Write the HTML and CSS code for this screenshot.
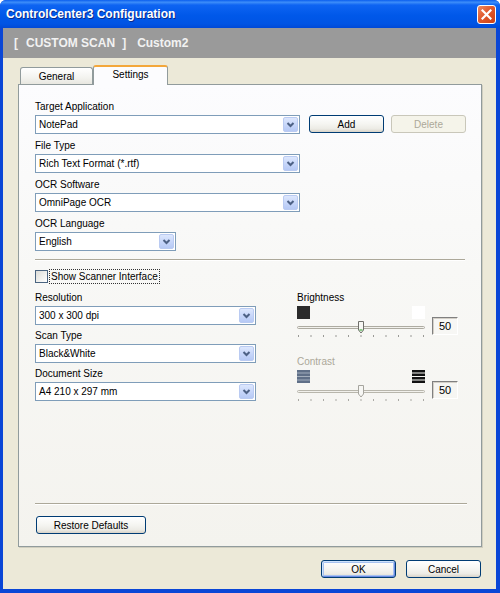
FILE: index.html
```html
<!DOCTYPE html>
<html>
<head>
<meta charset="utf-8">
<link rel="stylesheet" href="styles.css">
</head>
<body>
<div class="window">
  <div class="titlebar">
    <span class="title">ControlCenter3 Configuration</span>
    <div class="close">
      <svg width="11" height="11" viewBox="0 0 11 11"><path d="M1.5 1.5 L9.5 9.5 M9.5 1.5 L1.5 9.5" stroke="#fff" stroke-width="2.2" stroke-linecap="square"/></svg>
    </div>
  </div>
  <div class="client">
    <div class="banner">
      <span>[</span><span class="b-scan">CUSTOM SCAN</span><span class="b-close">]</span><span class="b-name">Custom2</span>
    </div>
    <div class="body">
      <div class="tabs">
        <div class="tab">General</div>
        <div class="tab active">Settings</div>
      </div>
      <div class="panel">
        <div class="group">
          <div class="lbl">Target Application</div>
          <div class="row">
            <div class="combo w265"><span class="ctext">NotePad</span><span class="cbtn"><svg width="13" height="13" viewBox="0 0 13 13"><path d="M3.5 5 L6.5 8 L9.5 5" fill="none" stroke="#4D6185" stroke-width="2"/></svg></span></div>
            <button class="btn add">Add</button>
            <button class="btn disabled del">Delete</button>
          </div>
        </div>
        <div class="group">
          <div class="lbl">File Type</div>
          <div class="combo w265"><span class="ctext">Rich Text Format (*.rtf)</span><span class="cbtn"><svg width="13" height="13" viewBox="0 0 13 13"><path d="M3.5 5 L6.5 8 L9.5 5" fill="none" stroke="#4D6185" stroke-width="2"/></svg></span></div>
        </div>
        <div class="group">
          <div class="lbl">OCR Software</div>
          <div class="combo w265"><span class="ctext">OmniPage OCR</span><span class="cbtn"><svg width="13" height="13" viewBox="0 0 13 13"><path d="M3.5 5 L6.5 8 L9.5 5" fill="none" stroke="#4D6185" stroke-width="2"/></svg></span></div>
        </div>
        <div class="group">
          <div class="lbl">OCR Language</div>
          <div class="combo w141"><span class="ctext">English</span><span class="cbtn"><svg width="13" height="13" viewBox="0 0 13 13"><path d="M3.5 5 L6.5 8 L9.5 5" fill="none" stroke="#4D6185" stroke-width="2"/></svg></span></div>
        </div>
        <div class="sep top-sep"></div>
        <div class="check-row">
          <span class="checkbox"></span>
          <span class="check-label">Show Scanner Interface</span>
        </div>
        <div class="lower">
          <div class="left-col">
            <div class="group">
              <div class="lbl">Resolution</div>
              <div class="combo w221"><span class="ctext">300 x 300 dpi</span><span class="cbtn"><svg width="13" height="13" viewBox="0 0 13 13"><path d="M3.5 5 L6.5 8 L9.5 5" fill="none" stroke="#4D6185" stroke-width="2"/></svg></span></div>
            </div>
            <div class="group g4">
              <div class="lbl">Scan Type</div>
              <div class="combo w221"><span class="ctext">Black&amp;White</span><span class="cbtn"><svg width="13" height="13" viewBox="0 0 13 13"><path d="M3.5 5 L6.5 8 L9.5 5" fill="none" stroke="#4D6185" stroke-width="2"/></svg></span></div>
            </div>
            <div class="group g4">
              <div class="lbl">Document Size</div>
              <div class="combo w221"><span class="ctext">A4 210 x 297 mm</span><span class="cbtn"><svg width="13" height="13" viewBox="0 0 13 13"><path d="M3.5 5 L6.5 8 L9.5 5" fill="none" stroke="#4D6185" stroke-width="2"/></svg></span></div>
            </div>
          </div>
          <div class="right-col">
            <div class="ctrl">
              <div class="lbl">Brightness</div>
              <div class="ctrl-row">
                <div class="ctrl-main">
                  <div class="icons">
                    <span class="sq-black"></span>
                    <span class="sq-white"></span>
                  </div>
                  <svg class="slider" width="128" height="20" viewBox="0 0 128 20">
                    <rect x="0.5" y="6.5" width="127" height="2" rx="1" fill="#F2F1EC" stroke="#ADABA1"/>
                    <path d="M61.5 1.5 H66.5 V10 L64 13 L61.5 10 Z" fill="#F7F7F4" stroke="#6F6F6A"/>
                    <line x1="62.5" y1="10" x2="65.5" y2="10" stroke="#21A121"/>
                    <g fill="#9A9A96">
                      <rect x="1" y="15" width="1" height="2"/><rect x="13.5" y="15" width="1" height="2"/><rect x="26" y="15" width="1" height="2"/><rect x="38.5" y="15" width="1" height="2"/><rect x="51" y="15" width="1" height="2"/><rect x="63.5" y="15" width="1" height="2"/><rect x="76" y="15" width="1" height="2"/><rect x="88.5" y="15" width="1" height="2"/><rect x="101" y="15" width="1" height="2"/><rect x="113.5" y="15" width="1" height="2"/><rect x="126" y="15" width="1" height="2"/>
                    </g>
                  </svg>
                </div>
                <div class="valbox">50</div>
              </div>
            </div>
            <div class="ctrl contrast">
              <div class="lbl dim">Contrast</div>
              <div class="ctrl-row">
                <div class="ctrl-main">
                  <div class="icons">
                    <svg width="13" height="13" viewBox="0 0 13 13">
                      <rect width="13" height="13" fill="#A3AEBC"/>
                      <rect y="0" width="13" height="2.5" fill="#5F6F87"/><rect y="3.5" width="13" height="2.5" fill="#5F6F87"/><rect y="7" width="13" height="2.5" fill="#5F6F87"/><rect y="10.5" width="13" height="2.5" fill="#5F6F87"/>
                    </svg>
                    <svg width="13" height="13" viewBox="0 0 13 13">
                      <rect y="0" width="13" height="2.5" fill="#111"/><rect y="3.5" width="13" height="2.5" fill="#111"/><rect y="7" width="13" height="2.5" fill="#111"/><rect y="10.5" width="13" height="2.5" fill="#111"/>
                    </svg>
                  </div>
                  <svg class="slider" width="128" height="20" viewBox="0 0 128 20">
                    <rect x="0.5" y="6.5" width="127" height="2" rx="1" fill="#F2F1EC" stroke="#B8B6AC"/>
                    <path d="M61.5 1.5 H66.5 V10 L64 13 L61.5 10 Z" fill="#F7F7F4" stroke="#A6A59E"/>
                    <g fill="#AAA9A4">
                      <rect x="1" y="15" width="1" height="2"/><rect x="13.5" y="15" width="1" height="2"/><rect x="26" y="15" width="1" height="2"/><rect x="38.5" y="15" width="1" height="2"/><rect x="51" y="15" width="1" height="2"/><rect x="63.5" y="15" width="1" height="2"/><rect x="76" y="15" width="1" height="2"/><rect x="88.5" y="15" width="1" height="2"/><rect x="101" y="15" width="1" height="2"/><rect x="113.5" y="15" width="1" height="2"/><rect x="126" y="15" width="1" height="2"/>
                    </g>
                  </svg>
                </div>
                <div class="valbox">50</div>
              </div>
            </div>
          </div>
        </div>
        <div class="spacer"></div>
        <div class="sep bottom-sep"></div>
        <div class="restore-row">
          <button class="btn restore">Restore Defaults</button>
        </div>
      </div>
      <div class="dialog-buttons">
        <button class="btn default">OK</button>
        <button class="btn">Cancel</button>
      </div>
    </div>
  </div>
</div>
</body>
</html>
```
FILE: styles.css
```css
html, body {
  margin: 0;
  padding: 0;
  background: #ffffff;
}

.window {
  width: 500px;
  height: 593px;
  box-sizing: border-box;
  display: flex;
  flex-direction: column;
  background: #0A46D6;
  border-radius: 6px 6px 0 0;
  overflow: hidden;
  font-family: "Liberation Sans", Arial, sans-serif;
  font-size: 10px;
  color: #000;
}

.titlebar {
  height: 28px;
  flex: none;
  display: flex;
  align-items: center;
  justify-content: space-between;
  padding: 0 4px 0 6px;
  background: linear-gradient(to bottom, #0A5EEE 0%, #3D8DF9 8%, #0E64F2 18%, #0058E9 55%, #0054E4 85%, #0049D6 100%);
}

.title {
  color: #ffffff;
  font-weight: bold;
  font-size: 12px;
  text-shadow: 1px 1px 0 #0B2A8A;
}

.close {
  width: 19px;
  height: 19px;
  box-sizing: border-box;
  border: 1px solid #ffffff;
  border-radius: 3px;
  background: linear-gradient(135deg, #EE8A62 0%, #E05A2E 45%, #CC4014 100%);
  display: flex;
  align-items: center;
  justify-content: center;
}

.client {
  flex: 1;
  margin: 0 4px 4px 3px;
  background: #ECE9D8;
  display: flex;
  flex-direction: column;
}

.banner {
  height: 30px;
  flex: none;
  display: flex;
  align-items: center;
  padding-left: 11px;
  background: #9A9A9A;
  color: #F2F2F2;
  font-weight: bold;
  font-size: 12px;
}

.b-scan { margin-left: 8px; }
.b-close { margin-left: 7px; }
.b-name { margin-left: 11px; }

.body {
  flex: 1;
  display: flex;
  flex-direction: column;
  padding: 7px 14px 11px 15px;
}

.tabs {
  height: 19px;
  flex: none;
  display: flex;
  align-items: flex-start;
}

.tab {
  box-sizing: border-box;
  width: 73px;
  height: 17px;
  margin-top: 2px;
  margin-left: 2px;
  border: 1px solid #919B9C;
  border-bottom: none;
  border-radius: 3px 3px 0 0;
  background: linear-gradient(to bottom, #FFFFFF, #F3F3EF 60%, #E8E7E0);
  display: flex;
  align-items: center;
  justify-content: center;
  padding-top: 1px;
}

.tab.active {
  position: relative;
  z-index: 2;
  width: 75px;
  height: 20px;
  margin-top: 0;
  margin-left: 0;
  background: #FCFCFE;
  border-top: 2px solid #F3A73B;
  padding-top: 0;
  padding-bottom: 3px;
}

.panel {
  position: relative;
  z-index: 1;
  box-sizing: border-box;
  width: 464px;
  height: 463px;
  flex: none;
  border: 1px solid #919B9C;
  box-shadow: 1px 1px 0 #D0CEBF;
  background: linear-gradient(to bottom, #FCFCFE 0%, #F8F8F6 40%, #F4F3EE 100%);
  padding: 15px 15px 12px 16px;
  display: flex;
  flex-direction: column;
}

.lbl {
  height: 13px;
  line-height: 13px;
  margin-bottom: 2px;
  white-space: nowrap;
}

.lbl.dim { color: #ACA899; }

.group + .group { margin-top: 5px; }
.group.g4 { margin-top: 4px; }

.row {
  display: flex;
  align-items: flex-start;
}

.combo {
  box-sizing: border-box;
  height: 19px;
  border: 1px solid #7F9DB9;
  background: #ffffff;
  display: flex;
  align-items: center;
  padding: 1px;
}

.w265 { width: 265px; }
.w141 { width: 141px; }
.w221 { width: 221px; }

.ctext {
  flex: 1;
  padding-left: 2px;
  white-space: nowrap;
}

.cbtn {
  box-sizing: border-box;
  width: 15px;
  height: 15px;
  border: 1px solid #BACBF2;
  border-radius: 2px;
  background: linear-gradient(to bottom, #DDE7FD, #C4D4F9 60%, #B6C9F5);
  display: flex;
  align-items: center;
  justify-content: center;
}

.btn {
  box-sizing: border-box;
  width: 75px;
  height: 18px;
  margin: 0;
  padding: 0;
  border: 1px solid #003C74;
  border-radius: 3px;
  background: linear-gradient(to bottom, #FFFFFF 0%, #F5F5F1 50%, #ECEBE5 80%, #D8D3C8 100%);
  font-family: "Liberation Sans", Arial, sans-serif;
  font-size: 10px;
  color: #000;
  display: flex;
  align-items: center;
  justify-content: center;
}

.btn.add { margin-left: 9px; }
.btn.del { margin-left: 7px; }

.btn.disabled {
  border-color: #C9C7BA;
  background: #F5F4EA;
  color: #ACA899;
}

.btn.default {
  box-shadow: inset 1px 1px 0 #CEE3FC, inset -1px -1px 0 #6A8BE3, inset 0 0 0 2px #A7C2F0;
}

.sep {
  height: 0;
  border-top: 1px solid #ACA899;
  border-bottom: 1px solid #FFFFFF;
  flex: none;
}

.top-sep {
  margin-top: 8px;
  width: 430px;
}

.bottom-sep {
  width: 432px;
}

.check-row {
  margin-top: 8px;
  height: 15px;
  display: flex;
  align-items: center;
}

.checkbox {
  box-sizing: border-box;
  width: 13px;
  height: 13px;
  border: 1px solid #4A6480;
  background: linear-gradient(135deg, #DCDCD7, #FFFFFF);
  margin-right: 1px;
}

.check-label {
  box-sizing: border-box;
  height: 15px;
  line-height: 13px;
  border: 1px dotted #333;
  padding: 0 1px;
  white-space: nowrap;
}

.lower {
  margin-top: 7px;
  display: flex;
}

.left-col {
  width: 221px;
}

.right-col {
  margin-left: 41px;
}

.ctrl-row {
  display: flex;
  margin-top: 1px;
}

.ctrl-main {
  width: 128px;
}

.icons {
  height: 13px;
  display: flex;
  justify-content: space-between;
}

.sq-black {
  width: 13px;
  height: 13px;
  background: #2B2B2B;
}

.sq-white {
  width: 13px;
  height: 13px;
  background: #FFFFFF;
}

.slider {
  display: block;
  margin-top: 1px;
}

.valbox {
  box-sizing: border-box;
  width: 26px;
  height: 18px;
  margin-left: 7px;
  margin-top: 11px;
  border-top: 1px solid #808080;
  border-left: 1px solid #808080;
  border-right: 1px solid #FFFFFF;
  border-bottom: 1px solid #FFFFFF;
  box-shadow: inset 1px 1px 0 #D4D0C8;
  font-size: 11px;
  display: flex;
  align-items: center;
  justify-content: center;
}

.ctrl.contrast {
  margin-top: 15px;
}

.spacer {
  flex: 1;
}

.restore-row {
  margin-top: 11px;
  display: flex;
}

.btn.restore {
  width: 110px;
  margin-left: 1px;
}

.dialog-buttons {
  margin-top: 13px;
  display: flex;
  justify-content: flex-end;
  gap: 10px;
  padding-right: 1px;
}
```
